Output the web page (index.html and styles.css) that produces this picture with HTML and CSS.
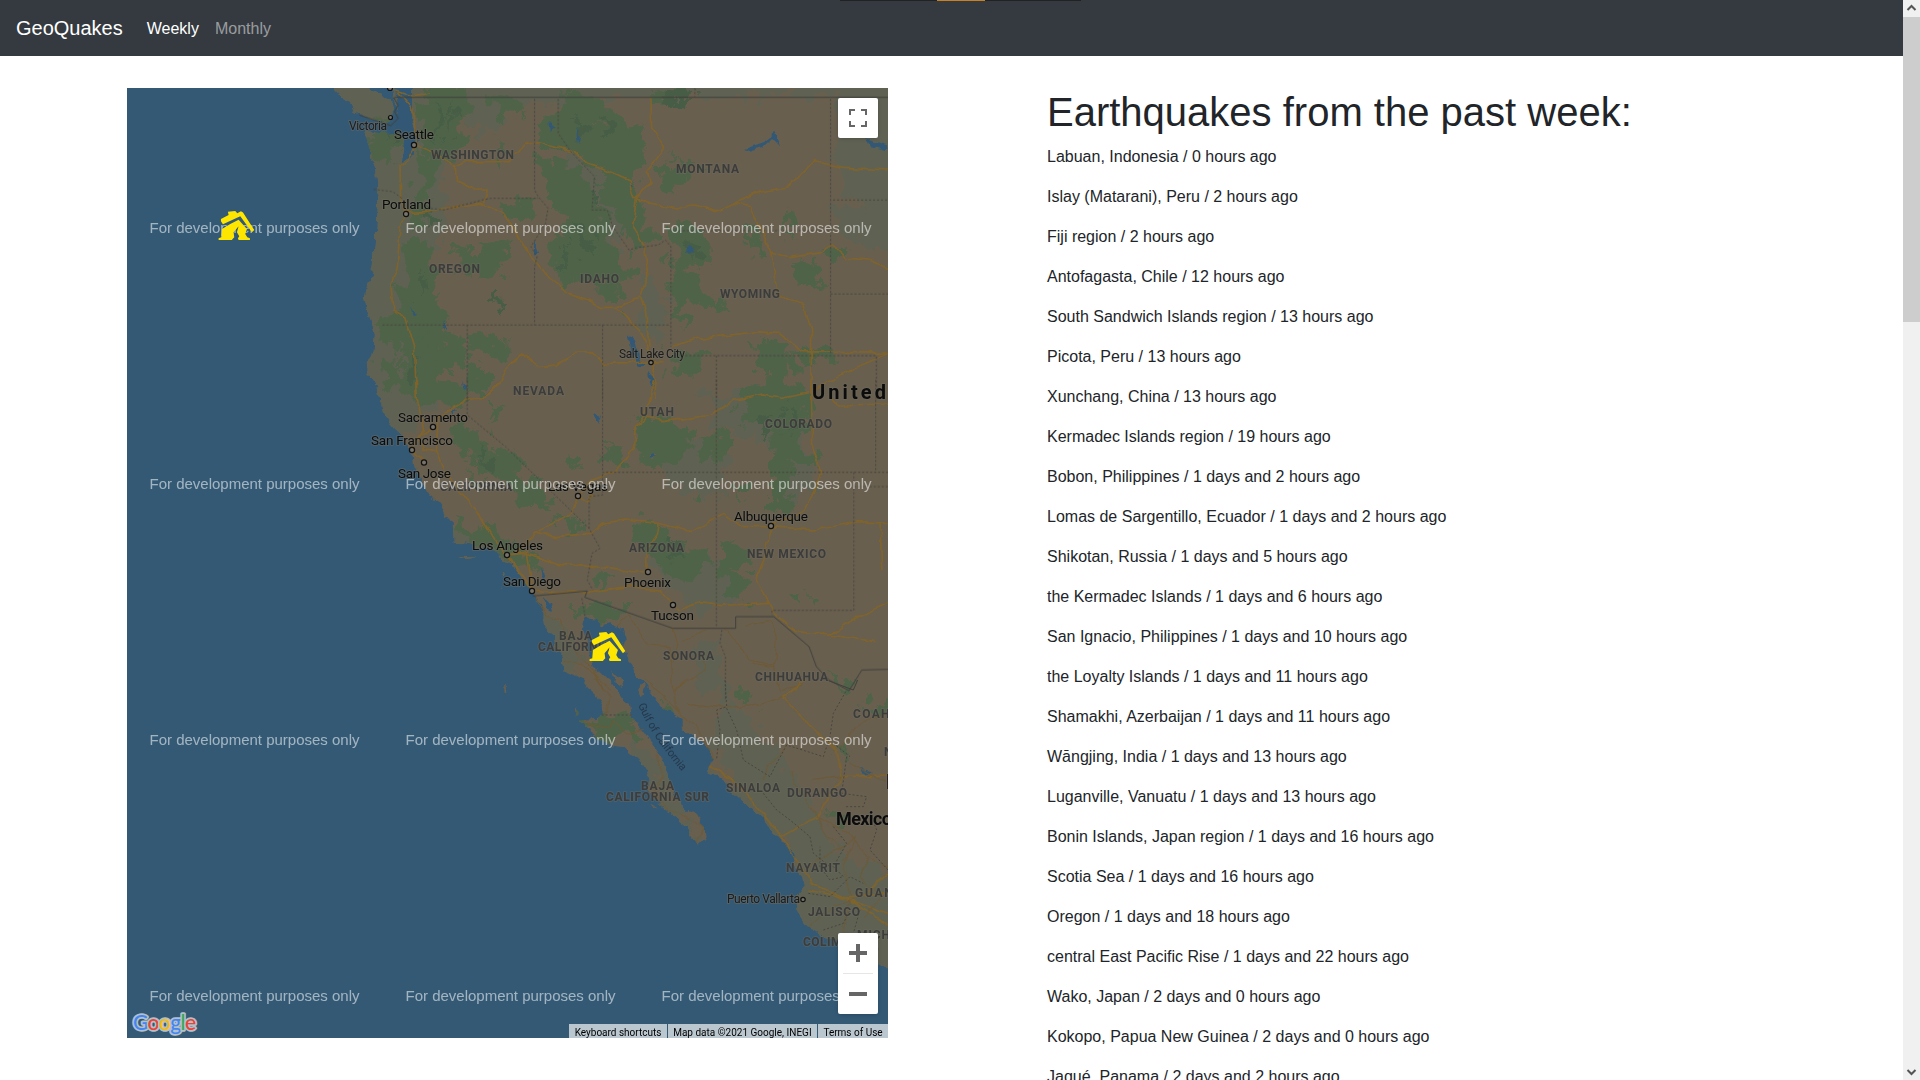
FILE: index.html
```html
<!DOCTYPE html>
<html lang="en">
<head>
<meta charset="utf-8">
<title>GeoQuakes</title>
<link rel="stylesheet" href="styles.css">
</head>
<body>
<div class="window">
<div class="page">
  <nav class="navbar">
    <a class="brand">GeoQuakes</a>
    <a class="nav-link active">Weekly</a>
    <a class="nav-link">Monthly</a>
    <div class="loader"><span></span></div>
  </nav>
  <main class="content">
    <section class="map">
      <svg class="tiles" viewBox="127 88 761 950" width="761" height="950">
        <defs>
          <filter id="rough" filterUnits="userSpaceOnUse" x="107" y="68" width="801" height="990"><feTurbulence type="fractalNoise" baseFrequency="0.09" numOctaves="3" seed="4"/><feDisplacementMap in="SourceGraphic" scale="9" xChannelSelector="R" yChannelSelector="G"/></filter>
          <filter id="rougher" filterUnits="userSpaceOnUse" x="87" y="48" width="841" height="1030"><feTurbulence type="fractalNoise" baseFrequency="0.06" numOctaves="4" seed="9"/><feDisplacementMap in="SourceGraphic" scale="34" xChannelSelector="R" yChannelSelector="G"/></filter>
          <filter id="wobble" filterUnits="userSpaceOnUse" x="107" y="68" width="801" height="990"><feTurbulence type="fractalNoise" baseFrequency="0.08" numOctaves="2" seed="2"/><feDisplacementMap in="SourceGraphic" scale="6" xChannelSelector="R" yChannelSelector="G"/></filter>
          <clipPath id="landclip">
            <path transform="translate(320 80) scale(.36364 .33333)" d="M215,-40 200,55 215,90 205,130 215,160 175,162 118,150 130,175 140,210 145,245 155,270 158,330 160,360 157,420 150,500 148,560 140,600 128,630 122,660 132,700 140,735 150,770 148,810 132,850 130,880 150,910 160,930 168,960H1620V-40Z M20,-10 38,24 50,50 80,65 95,95 130,115 190,128 205,100 195,60 150,40 130,24 110,-10Z"/>
            <path transform="translate(320 380) scale(.36364 .33333)" d="M150,-10 160,0 168,30 168,70 180,110 205,145 225,165 240,190 245,210 258,235 262,260 275,290 290,325 300,345 325,375 345,405 365,430 368,488 400,490 430,497 465,505 490,520 505,545 530,555 550,590 575,610 585,640 595,665 615,700 615,730 640,760 645,800 665,830 670,870 700,885 725,902H795L775,880 750,860 742,830 735,790 722,750 730,715 760,720 775,735 800,730 835,755 838,780 825,800 840,830 858,850 865,880 882,902H1620V-10Z M390,528 410,528 430,530 405,536Z M500,575 508,580 505,590Z M498,615 506,620 502,624Z M806,870 830,895 832,925 815,905Z"/>
            <path transform="translate(480 680) scale(.33333)" d="M305,-1 325,25 355,50 368,75 372,105 350,120 300,122 320,140 335,165 370,180 400,200 430,205 460,230 490,255 510,290 505,320 520,350 540,375 570,400 600,425 625,445 635,480 650,495 665,480 683,470 680,440 660,425 645,395 625,390 620,400 600,380 590,350 575,320 560,280 550,240 530,210 510,185 490,155 470,135 455,105 450,75 430,60 410,35 387,-1Z M482,-1 505,30 540,75 580,105 605,120 605,145 640,175 680,200 700,235 685,260 690,275 730,300 750,330 785,360 810,385 850,420 880,460 910,490 940,520 945,565 970,590 975,620 945,655 950,690 970,720 990,745 1030,768 1075,785 1120,820 1200,855 1290,905V-1Z M400,0 425,5 430,25 418,20Z M478,15 490,12 492,40 478,48 474,35Z M280,100 290,85 293,100Z M75,15 80,18 82,38 77,36Z M510,370 530,382 518,380Z"/>
          </clipPath>
        </defs>
        <rect class="water" x="127" y="88" width="761" height="950"/>
        <g filter="url(#rough)"><g clip-path="url(#landclip)">
          <rect class="land" x="127" y="60" width="790" height="1000"/>
          <g filter="url(#rougher)">
            <g class="plain">
              <path d="M310,60H445V180L438,250 430,300 440,400 400,440 440,520 520,570 500,590 350,500Z"/>
              <path d="M440,60H920V96H600L560,110 540,96 480,140Z M838,88H920V205L880,215 838,190Z M570,150 620,180 640,230 600,260 560,200Z M640,270 668,300 660,350 640,330Z"/>
              <path d="M835,205 900,215V250L850,240Z M700,390 760,400 770,440 720,430Z M640,430 730,450 720,500 660,480Z M760,400 800,400 815,490 780,500Z M640,560 720,560 740,600 700,620Z"/>
              <path d="M722,700 760,730 780,760 810,800 835,850 910,880V1060H780V900L800,860 740,790 710,740Z M690,640 720,650 730,700 700,690Z M530,600 560,620 580,660 560,690 530,650Z M690,760 740,790 790,860 760,860Z M620,730 660,760 680,810 700,845 680,840Z"/>
            </g>
            <g class="forest">
              <path d="M420,88 470,90 466,125 455,158 436,160 420,130Z M380,118 402,132 394,162 372,150Z M420,150 438,160 434,190 424,222 412,230 418,185Z M407,240 432,245 438,300 452,320 440,370 452,405 410,400 398,345 376,330 398,300 405,280Z"/>
              <path d="M488,90 512,92 520,112 496,122Z M538,125 566,96 590,96 592,120 622,130 640,160 636,200 612,180 590,162 574,150 546,148Z M560,90 600,98 640,130 646,168 620,140Z M538,158 588,170 594,210 608,222 622,258 612,290 588,280 560,290 552,250 566,220 548,200Z"/>
              <path d="M600,150 625,170 634,200 655,240 634,250 600,200Z M608,238 632,272 624,298 600,262Z M600,282 616,286 622,312 610,304Z"/>
              <path d="M648,90 670,96 650,112Z M652,160 684,172 690,192 664,190Z M672,218 708,232 712,262 690,270 722,310 690,300 678,330 668,280Z M742,228 762,240 766,262 748,248Z M792,262 818,264 820,285 796,288Z M672,158 700,165 690,178Z M784,210 796,222 790,240Z M830,240 850,252 840,266 828,256Z"/>
              <path d="M450,248 510,246 500,272 468,280Z M502,202 534,196 538,222 508,222Z M414,332 468,346 458,372 424,360Z M468,332 512,340 500,360 474,352Z M464,362 490,372 490,400 470,392Z"/>
              <path d="M665,352 712,356 700,370 670,366Z M752,342 790,346 786,382 768,398 756,366Z M790,348 830,352 836,362 800,368Z M742,390 800,382 812,400 800,440 824,460 772,468 774,430 738,420Z M770,464 794,468 790,510 770,506Z"/>
              <path d="M394,380 450,380 474,396 450,410 414,402Z M450,425 478,430 492,450 516,468 540,490 548,510 530,505 506,486 470,462Z M462,470 480,480 478,492Z M456,520 500,534 540,558 536,570 500,558 462,538Z"/>
              <path d="M604,444 622,446 630,460 610,466Z M636,416 664,416 700,436 680,460 650,468 636,440Z M720,430 732,444 712,462 700,452Z M568,452 582,460 576,472Z M556,516 588,524 580,530 558,530Z M690,490 706,500 694,508Z"/>
              <path d="M496,440 516,450 524,480 510,490Z M528,474 548,490 550,508 534,508Z M380,360 400,364 396,390 384,384Z M490,400 498,410 492,424Z M734,480 750,484 740,496Z"/>
              <path d="M630,524 660,520 676,545 712,552 708,568 690,578 664,576 652,556 636,540Z M718,538 752,546 748,570 718,572Z M718,570 752,578 746,600 724,594Z M600,568 610,570 606,586 598,584Z M788,590 800,592 794,604Z M570,606 634,606 622,618 600,622 580,616Z M808,594 820,606 812,612Z"/>
              <path d="M830,676 862,684 848,690Z M735,692 752,700 744,708Z M600,718 636,716 644,734 616,742 590,730 570,722Z M656,702 674,710 668,718Z M862,698 888,706 882,718Z M830,744 848,750 838,758Z M828,812 850,818 840,832Z M498,140 506,160 496,172Z"/>
            </g>
            <g class="shade">
              <path d="M438,98 446,118 434,144Z M452,100 460,120 450,130Z M576,120 590,128 582,140Z M600,118 614,130 606,140Z M572,220 600,240 588,262Z M562,240 572,264 562,274Z M592,190 602,210 590,208Z M686,240 700,252 690,262Z M420,270 428,290 420,300Z M410,356 424,366 412,380Z M478,440 494,462 484,470Z M668,536 684,554 670,560Z M762,412 774,416 766,440Z M782,402 794,420 786,440Z M494,298 504,300 498,316Z M386,124 394,134 386,146Z M428,200 432,222 424,230Z M656,100 700,92 680,108Z"/>
            </g>
          </g>
          <path class="lake" d="M396,84 412,88 412,118 418,138 410,160 402,164 404,140 392,122 398,112Z M628,334 636,340 640,358 646,364 640,366 630,350Z M648,374 656,380 652,390Z M688,245 694,252 686,254Z M548,122 556,128 550,132Z M576,128 580,136 578,144Z M410,306 418,316 414,318Z M444,320 448,330 442,328Z M462,380 468,388 464,390Z M450,407 456,410 452,415Z M593,412 602,416 598,424Z M540,570 546,576 542,580Z M544,597 550,604 552,610 546,608Z M652,452 656,456 652,458Z M742,150 764,142 776,132 780,146 772,138 762,148 748,152Z M628,178 634,186 630,188Z M860,768 872,770 866,774Z M534,240 538,250 534,256Z M403,455 410,463 406,458Z M866,138 888,146 884,150 870,146Z"/>
        </g></g>
        <g class="roads" filter="url(#wobble)">
          <g transform="translate(320 80) scale(.36364 .33333)">
            <path d="M215,35 250,80 262,130 265,190 240,240 220,260 222,370 240,400 220,440 212,570 195,610 200,690 235,710 260,800 265,960M265,195 310,215 375,260 400,245 520,245 565,190 600,185 700,215 735,250 780,265 850,300 862,355 920,370 980,390 1035,375 1090,395 1140,370 1215,335 1290,320 1360,245 1440,262 1562,270M240,398 290,395 340,385 440,370 510,400 545,475 615,580 690,645 740,660 770,682 815,682 880,750 910,830 925,900 920,960M375,262 378,300 430,330 460,330 450,370M910,52 912,140 945,205 900,270 908,310 870,355 860,440 892,495 902,590 880,650 815,682M880,650 895,690 905,800M1140,370 1185,380 1215,450 1240,520 1290,530 1380,515 1410,495 1450,535 1510,540 1562,565M1240,520 1262,650 1330,670 1352,750 1350,960M965,800 1040,775 1130,765 1200,755 1260,760 1325,815 1562,820M945,845 780,850 745,818 700,820 650,855 600,860 555,825 520,855 500,900 455,950M1562,820 1480,860 1420,895 1350,930M210,30 260,48 300,35"/>
          </g>
          <g transform="translate(320 380) scale(.36364 .33333)">
            <path d="M265,0 268,60 285,150 253,205 286,240M500,0 455,50 405,60 360,90 325,110 320,210 350,290 430,390 480,480 515,525 560,590 590,640M310,140 275,170 285,210 320,215M920,0 905,70 870,140 865,200 810,275 750,300 710,350 690,400 590,460 540,520 515,525M870,140 900,105 940,125 1080,105 1140,60 1220,45 1270,55 1345,38M1350,0 1355,200 1378,280 1330,395 1245,430 1220,540 1200,600 1215,635 1248,700 1310,755 1400,765 1530,785M590,460 650,470 745,460 775,430 840,420 930,430 1025,455 1110,403 1160,440 1240,440 1360,450 1480,425 1562,430M515,525 560,520 650,553 760,560 860,575 902,576M590,630 650,638 745,635 850,620 935,630 985,688 1045,665 1130,678 1235,670M930,430 925,460 900,500 898,575M1400,765 1480,710 1562,670M1400,45 1420,78 1562,75M1540,430 1545,570M710,350 735,368 750,345M515,525 570,515 583,633"/>
            <path class="minor" d="M590,645 620,705 660,720 690,800 750,870 780,930M850,705 900,795 960,800 970,930 1060,870 1050,810M850,705 815,740M970,745 985,790 970,850M1115,745 1180,840 1250,855 1260,930M1170,735 1240,725 1255,770 1250,860 1190,850M670,845 720,850 800,930M1000,785 1060,750M1260,930 1330,915"/>
          </g>
          <g transform="translate(480 680) scale(.33333)">
            <path d="M690,260 760,300 850,400 905,470 975,580 1000,615 1110,660 1224,700M905,470 1010,410 1085,290 1070,210 990,140 910,50 980,0M1085,290 1224,285M985,630 1090,655 1224,640M1110,660 1224,735M1150,650 1224,580"/>
            <path class="minor" d="M500,0 590,90 650,140 700,235M590,90 580,30 620,0M620,70 740,85 840,75 910,50M920,190 870,260 850,300M930,270 950,320 1010,410 1110,460 1160,530 1224,560M310,125 390,145 400,120 440,160 490,155M350,0 390,50 380,105M530,220 550,290 520,340 570,390 640,420 670,440 650,490M1130,470 1090,560 1110,650M1170,530 1140,590 1200,650 1150,720M985,560 1050,520 1130,470M985,740 1060,680 1110,660 1090,760M1080,205 1140,130 1224,100M1110,250 1224,310M1080,500 1040,470 1010,410M1000,300 1085,290"/>
          </g>
        </g>
        <g class="borders">
          <g transform="translate(320 80) scale(.36364 .33333)">
            <path class="solid" d="M205,52H1562M108,105 195,137 215,115 205,95 215,75 202,52"/>
            <path d="M590,57V330L600,350 627,385 620,430 580,500 597,530 590,560V735M655,57V160L690,215 755,290 748,390 790,390 805,440 850,510 870,503 930,495 950,480 965,500V800M445,360 470,355H600M148,328 200,335 225,355M305,385 340,390 440,362M172,735H965M405,735V960M777,735V960M1005,827H1530V960M1090,827V960M1404,57V820M1031,24V50M1411,360H1562M1404,642H1562M965,452H1404"/>
          </g>
          <g transform="translate(320 380) scale(.36364 .33333)">
            <path class="solid" d="M585,648 735,633 728,652 970,745H1143V710H1248L1345,800 1365,860 1400,900 1455,932 1490,870 1562,868"/>
            <path d="M405,0V105L510,200 740,445 770,505 748,520 735,600 750,630M777,0V277H1562M1090,0V745M1528,0V277M740,445V350L777,345V277M1468,277V691H1243V705M1468,320H1562M720,655 730,715M1105,750 1100,790 1115,830 1115,960"/>
          </g>
          <g transform="translate(480 680) scale(.33333)">
            <path class="solid" d="M1040,0 1120,30 1133,0"/>
            <path d="M365,105H455M735,0 740,80 710,90 720,150 710,235M740,85 770,150 790,240 870,290 885,260 920,195 1030,230 1050,170 1060,100 1100,30M850,340 890,390 930,420 990,470 1000,520 1050,560M1100,230 1085,340 1160,350 1150,380 1095,380M1060,440 1100,490 1060,560 1090,590 1050,600 1020,560 1020,500M1170,400 1190,450 1170,510 1224,570M985,640 1050,650 1080,620 1110,590 1150,610M1030,750 1090,730 1110,690M1140,690 1120,760 1200,810M1060,190 1110,230"/>
          </g>
        </g>
        <g class="state">
          <text x="431" y="159" textLength="83">WASHINGTON</text><text x="676" y="173" textLength="63">MONTANA</text><text x="429" y="273" textLength="51">OREGON</text><text x="580" y="283" textLength="39">IDAHO</text><text x="720" y="298" textLength="60">WYOMING</text><text x="513" y="395" textLength="51">NEVADA</text><text x="640" y="416" textLength="34">UTAH</text><text x="765" y="428" textLength="67">COLORADO</text><text x="440" y="491" textLength="72">CALIFORNIA</text><text x="629" y="552" textLength="55">ARIZONA</text><text x="747" y="558" textLength="79">NEW MEXICO</text><text x="559" y="640" textLength="33">BAJA</text><text x="538" y="651" textLength="72">CALIFORNIA</text><text x="663" y="660" textLength="51">SONORA</text><text x="755" y="681" textLength="73">CHIHUAHUA</text><text x="853" y="718" textLength="68">COAHUILA</text><text x="726" y="792" textLength="54">SINALOA</text><text x="787" y="797" textLength="60">DURANGO</text><text x="641" y="790" textLength="33">BAJA</text><text x="606" y="801" textLength="103">CALIFORNIA SUR</text><text x="786" y="872" textLength="54">NAYARIT</text><text x="855" y="897" textLength="94">GUANAJUATO</text><text x="808" y="916" textLength="52">JALISCO</text><text x="803" y="946" textLength="47">COLIMA</text><text x="857" y="939" textLength="78">MICHOACÁN</text><text x="884" y="756">N</text>
        </g>
        <g class="city">
          <text class="small" x="349" y="130" textLength="38">Victoria</text><text x="394" y="139" textLength="40">Seattle</text><text x="382" y="208.500" textLength="49">Portland</text><text class="small" x="619" y="358" textLength="66">Salt Lake City</text><text x="398" y="421.500" textLength="70">Sacramento</text><text x="371" y="444.500" textLength="82">San Francisco</text><text x="398" y="477.500" textLength="53">San Jose</text><text x="548" y="491" textLength="60">Las Vegas</text><text x="472" y="549.500" textLength="71">Los Angeles</text><text x="503" y="585.500" textLength="58">San Diego</text><text x="624" y="586.500" textLength="47">Phoenix</text><text x="651" y="619.500" textLength="43">Tucson</text><text x="734" y="520.500" textLength="74">Albuquerque</text><text class="small" x="727" y="903" textLength="73">Puerto Vallarta</text>
          <text class="country" x="886" y="789">M</text>
          <text class="country" x="812" y="399" textLength="74">United</text><text class="country mx" x="836" y="825" textLength="56">Mexico</text>
        </g>
        <path id="gulf" fill="none" d="M638,705Q652,738 686,776"/>
        <text class="sea"><textPath href="#gulf" textLength="80">Gulf of California</textPath></text>
        <g class="dots"><circle cx="390.500" cy="117.500" r="2"/><circle cx="390" cy="88" r="2.500"/><circle cx="414" cy="145" r="2.600"/><circle cx="406" cy="214" r="2.600"/><circle cx="651" cy="362.500" r="2.200"/><circle cx="433" cy="427" r="2.600"/><circle cx="412" cy="450" r="2.600"/><circle cx="424" cy="462.500" r="2.600"/><circle cx="578" cy="496" r="2.600"/><circle cx="507" cy="555" r="2.600"/><circle cx="532" cy="591" r="2.600"/><circle cx="648" cy="572" r="2.600"/><circle cx="673" cy="605" r="2.600"/><circle cx="771" cy="526" r="2.600"/><circle cx="803" cy="899.500" r="2.200"/></g>
        <g class="watermark">
          <text x="149.500" y="233" textLength="210">For development purposes only</text><text x="405.500" y="233" textLength="210">For development purposes only</text><text x="661.500" y="233" textLength="210">For development purposes only</text>
          <text x="149.500" y="489" textLength="210">For development purposes only</text><text x="405.500" y="489" textLength="210">For development purposes only</text><text x="661.500" y="489" textLength="210">For development purposes only</text>
          <text x="149.500" y="745" textLength="210">For development purposes only</text><text x="405.500" y="745" textLength="210">For development purposes only</text><text x="661.500" y="745" textLength="210">For development purposes only</text>
          <text x="149.500" y="1001" textLength="210">For development purposes only</text><text x="405.500" y="1001" textLength="210">For development purposes only</text><text x="661.500" y="1001" textLength="210">For development purposes only</text>
        </g>
        <defs><path id="house" d="M7,34V27L30,15 28,5 50,3 56,10 67,4Q74,6 78,15L107,60 100,67 65,19 13,43Z M10,57 35,42 60,29 85,57 80,72 86,82 94,85V90H60L58,85 62,79 55,67 60,49 45,67 47,82 42,87 40,90H0V85L8,82Z"/></defs>
        <g class="quakes"><use href="#house" transform="translate(218.600 210) scale(.33333)"/><use href="#house" transform="translate(589.600 631) scale(.33333)"/></g>
        <text class="logo" x="133" y="1030" textLength="63"><tspan fill="#4285f4">G</tspan><tspan fill="#ea4335">o</tspan><tspan fill="#fbbc05">o</tspan><tspan fill="#4285f4">g</tspan><tspan fill="#34a853">l</tspan><tspan fill="#ea4335">e</tspan></text>
      </svg>
      <button class="fullscreen" aria-label="Toggle fullscreen view"><svg width="18" height="18" viewBox="0 0 18 18"><path fill="#666" d="M0,0H6V2H2V6H0Z M12,0H18V6H16V2H12Z M0,12H2V16H6V18H0Z M16,12H18V18H12V16H16Z"/></svg></button>
      <div class="zoom">
        <button aria-label="Zoom in"><svg width="18" height="18" viewBox="0 0 18 18"><path fill="#666" d="M7,0H11V7H18V11H11V18H7V11H0V7H7Z"/></svg></button>
        <i></i>
        <button aria-label="Zoom out"><svg width="18" height="18" viewBox="0 0 18 18"><path fill="#666" d="M0,7H18V11H0Z"/></svg></button>
      </div>
      <div class="attribution"><span>Keyboard shortcuts</span><span>Map data ©2021 Google, INEGI</span><span>Terms of Use</span></div>
    </section>
    <section class="list">
      <h1>Earthquakes from the past week:</h1>
      <p>Labuan, Indonesia / 0 hours ago</p>
      <p>Islay (Matarani), Peru / 2 hours ago</p>
      <p>Fiji region / 2 hours ago</p>
      <p>Antofagasta, Chile / 12 hours ago</p>
      <p>South Sandwich Islands region / 13 hours ago</p>
      <p>Picota, Peru / 13 hours ago</p>
      <p>Xunchang, China / 13 hours ago</p>
      <p>Kermadec Islands region / 19 hours ago</p>
      <p>Bobon, Philippines / 1 days and 2 hours ago</p>
      <p>Lomas de Sargentillo, Ecuador / 1 days and 2 hours ago</p>
      <p>Shikotan, Russia / 1 days and 5 hours ago</p>
      <p>the Kermadec Islands / 1 days and 6 hours ago</p>
      <p>San Ignacio, Philippines / 1 days and 10 hours ago</p>
      <p>the Loyalty Islands / 1 days and 11 hours ago</p>
      <p>Shamakhi, Azerbaijan / 1 days and 11 hours ago</p>
      <p>Wāngjing, India / 1 days and 13 hours ago</p>
      <p>Luganville, Vanuatu / 1 days and 13 hours ago</p>
      <p>Bonin Islands, Japan region / 1 days and 16 hours ago</p>
      <p>Scotia Sea / 1 days and 16 hours ago</p>
      <p>Oregon / 1 days and 18 hours ago</p>
      <p>central East Pacific Rise / 1 days and 22 hours ago</p>
      <p>Wako, Japan / 2 days and 0 hours ago</p>
      <p>Kokopo, Papua New Guinea / 2 days and 0 hours ago</p>
      <p>Jaqué, Panama / 2 days and 2 hours ago</p>
    </section>
  </main>
</div>
<div class="scrollbar">
  <svg width="17" height="17" viewBox="0 0 17 17"><path d="M4.500,10 8.500,6 12.500,10"/></svg>
  <div class="thumb"></div>
  <svg class="down" width="17" height="17" viewBox="0 0 17 17"><path d="M4.500,7 8.500,11 12.500,7"/></svg>
</div>
</div>
</body>
</html>
```
FILE: styles.css
```css
*{box-sizing:border-box}
body{margin:0;background:#fff;color:#212529;font:16px/24px "Liberation Sans",Arial,sans-serif;overflow:hidden}
.window{display:flex;height:1080px;overflow:hidden}
.page{flex:1;min-width:0}
.navbar{position:relative;display:flex;align-items:center;height:56px;padding:0 16px;background:#343a40}
.brand{font-size:20px;line-height:30px;color:#fff;margin-right:16px}
.nav-link{padding:9px 8px 7px;color:rgba(255,255,255,.5)}
.nav-link.active{color:#fff}
.loader{position:absolute;top:0;left:840px;width:241px;height:1px;background:#222;display:flex;justify-content:center}
.loader span{width:48px;background:#c98223}
.content{display:grid;grid-template-columns:761px 1fr;column-gap:159px;padding:32px 0 0 127px}
.map{position:relative;height:950px;overflow:hidden;background:#335975}
.tiles{display:block}
.water{fill:#335975}
.land{fill:#675f50}
.plain{fill:#5f6252}
.forest{fill:#4f644a}
.shade{fill:#465d45}
.lake{fill:#335975}
.roads path{fill:none;stroke:#80642c;stroke-width:1.6;vector-effect:non-scaling-stroke;stroke-linejoin:round}
.roads .minor{stroke:#705a34;stroke-width:1}
.borders path{fill:none;stroke:#49463f;stroke-width:1;stroke-dasharray:2 2;vector-effect:non-scaling-stroke}
.borders .solid{stroke-dasharray:none;stroke:#41413d}
.state,.city,.sea{font-family:Roboto,sans-serif;paint-order:stroke;stroke-linejoin:round}
.state{font-size:12px;font-weight:700;fill:#3c3c3b;stroke:rgba(110,108,98,.4);stroke-width:2px}
.city{font-size:13.500px;fill:#0c0c0c;stroke:rgba(110,108,98,.5);stroke-width:2px}
.small{font-size:12px;fill:#1c1c1c}
.country{font-size:20px;font-weight:700}
.mx{font-size:18px}
.sea{font-size:11px;fill:#26384a}
.dots circle{fill:#77736a;stroke:#111;stroke-width:1.2}
.watermark{font-size:15px;fill:rgba(255,255,255,.55)}
.quakes{fill:#ffe600}
.logo{font:500 21px Lato,sans-serif;stroke:#b3c0ca;stroke-width:3.5px;paint-order:stroke;stroke-linejoin:round}
button{display:flex;align-items:center;justify-content:center;border:0;padding:0;background:none;width:40px;height:40px}
.fullscreen,.zoom{position:absolute;right:10px;background:#fff;border-radius:2px;box-shadow:0 1px 4px -1px rgba(0,0,0,.3)}
.fullscreen{top:10px}
.zoom{bottom:24px;width:40px;height:81px}
.zoom i{display:block;width:30px;height:1px;margin:0 5px;background:#e6e6e6}
.attribution{position:absolute;right:0;bottom:0;display:flex;gap:1px;height:14px;font:10px/17px Roboto,sans-serif;color:#000;white-space:nowrap}
.attribution span{padding:0 5.400px;background:#bbc7cf}
h1{margin:0 0 9px;font-size:40px;line-height:48px;font-weight:400}
p{margin:0 0 16px}
.scrollbar{display:flex;flex-direction:column;width:17px;height:1080px;background:#f0f0f0}
.scrollbar path{fill:none;stroke:#555;stroke-width:2}
.thumb{height:305px;background:#cdcdcd}
.down{margin-top:auto}
```
